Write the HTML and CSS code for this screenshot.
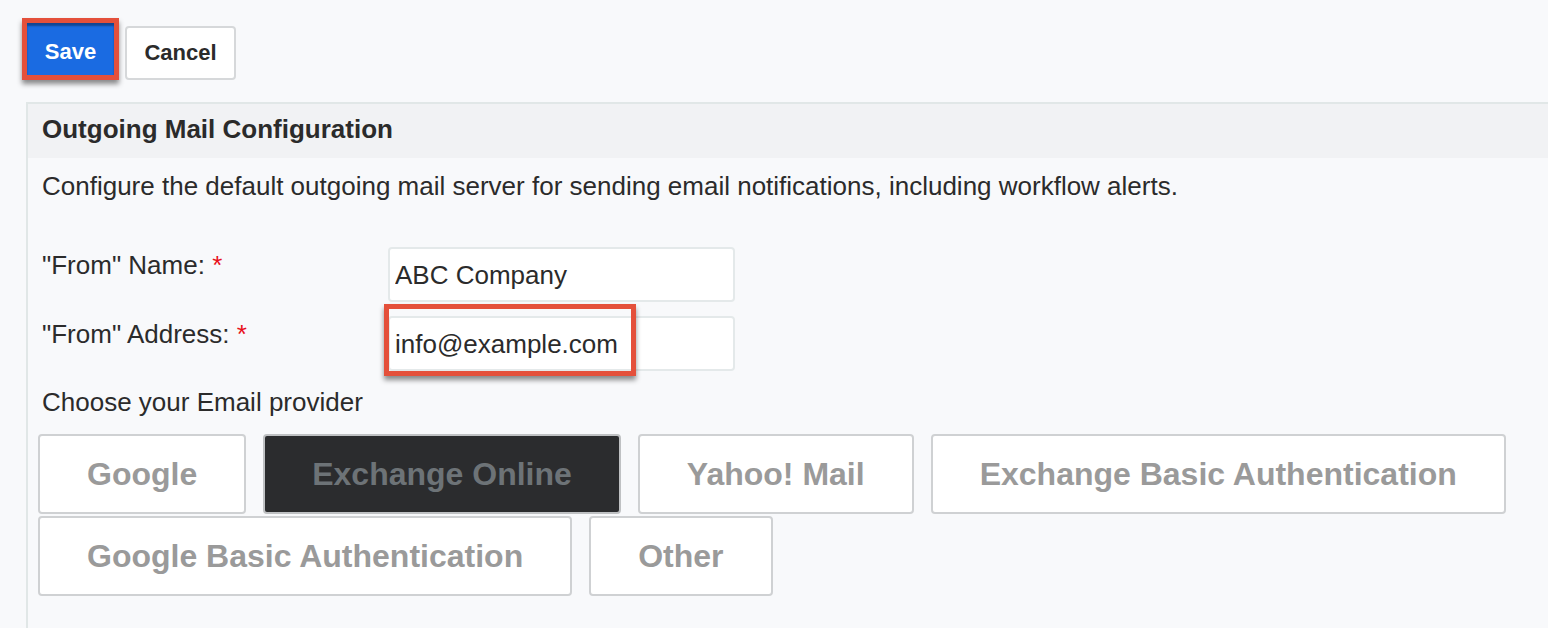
FILE: index.html
```html
<!DOCTYPE html>
<html lang="en">
<head>
    <meta charset="UTF-8">
    <title>Outgoing Mail Configuration</title>
    <link rel="stylesheet" href="styles.css">
</head>
<body>
    <div class="toolbar">
        <span class="callout">
            <button class="btn btn-primary">Save</button>
        </span>
        <button class="btn btn-default">Cancel</button>
    </div>

    <div class="panel">
        <h2 class="panel-title">Outgoing Mail Configuration</h2>
        <div class="panel-body">
            <p class="intro">Configure the default outgoing mail server for sending email notifications, including workflow alerts.</p>

            <div class="field">
                <label for="fromName">"From" Name: <span class="required">*</span></label>
                <input type="text" id="fromName" value="ABC Company">
            </div>

            <div class="field">
                <label for="fromAddress">"From" Address: <span class="required">*</span></label>
                <div class="input-wrap">
                    <input type="text" id="fromAddress" value="info@example.com">
                    <span class="callout-box"></span>
                </div>
            </div>

            <p class="provider-label">Choose your Email provider</p>
            <div class="providers">
                <button class="provider">Google</button>
                <button class="provider active">Exchange Online</button>
                <button class="provider">Yahoo! Mail</button>
                <button class="provider">Exchange Basic Authentication</button>
                <button class="provider">Google Basic Authentication</button>
                <button class="provider">Other</button>
            </div>
        </div>
    </div>
</body>
</html>
```

FILE: styles.css
```css
body {
    margin: 0;
    background-color: #f8f9fb;
    font-family: "Liberation Sans", Arial, sans-serif;
    color: #2b2b2b;
    overflow: hidden;
}
.toolbar {
    display: flex;
    align-items: flex-end;
    gap: 6px;
    padding: 18px 0 0 22px;
    height: 62px;
}
.btn {
    font-family: inherit;
    font-weight: bold;
    font-size: 22px;
    border-radius: 4px;
    cursor: pointer;
}
.callout {
    display: inline-block;
    border: 5px solid #e4503b;
    box-shadow: 0 4px 5px rgba(0,0,0,0.45);
    line-height: 0;
}
.btn-primary {
    background-color: #1a6be2;
    color: white;
    border: none;
    border-radius: 0;
    width: 87px;
    height: 52px;
    padding-top: 7px;
    box-shadow: inset 0 3px 2px rgba(0,0,0,0.35);
}
.btn-default {
    background-color: white;
    color: #2b2b2b;
    border: 2px solid #d6d8da;
    width: 111px;
    height: 54px;
}
.panel {
    margin: 22px 0 0 26px;
    border-top: 2px solid #e1e7e7;
    border-left: 2px solid #e1e7e7;
}
.panel-title {
    margin: 0;
    background-color: #f1f2f4;
    font-size: 26px;
    height: 54px;
    line-height: 51px;
    padding-left: 14px;
    color: #2b2b2b;
}
.panel-body {
    padding: 0 0 40px 14px;
}
.intro {
    margin: 0;
    padding-top: 14px;
    font-size: 26px;
    line-height: 28px;
}
.field {
    display: flex;
    align-items: flex-start;
    margin-top: 14px;
}
.panel-body .field:first-of-type {
    margin-top: 47px;
}
.field label {
    width: 346px;
    font-size: 26px;
    line-height: 30px;
    padding-top: 3px;
}
.required {
    color: #e8101a;
}
.input-wrap {
    position: relative;
}
.field input {
    width: 347px;
    height: 55px;
    box-sizing: border-box;
    border: 2px solid #e4e9ea;
    border-radius: 4px;
    background: white;
    font-family: inherit;
    font-size: 26px;
    color: #2b2b2b;
    padding: 2px 5px 0;
}
.callout-box {
    position: absolute;
    left: -4px;
    top: -12px;
    width: 242px;
    height: 62px;
    border: 5px solid #e4503b;
    box-shadow: 0 4px 5px rgba(0,0,0,0.45);
}
.provider-label {
    margin: 16px 0 0;
    font-size: 26px;
    line-height: 30px;
}
.providers {
    display: flex;
    flex-wrap: wrap;
    gap: 2px 17px;
    margin: 17px 0 0 -4px;
    max-width: 1500px;
}
.provider {
    height: 80px;
    padding: 0 47px;
    background: white;
    border: 2px solid #cfd1d3;
    border-radius: 4px;
    font-family: inherit;
    font-size: 32px;
    font-weight: bold;
    color: #9a9a9a;
    cursor: pointer;
}
.provider.active {
    background-color: #2b2c2e;
    color: #6d7377;
    border-color: #bfc1c3;
}
```
